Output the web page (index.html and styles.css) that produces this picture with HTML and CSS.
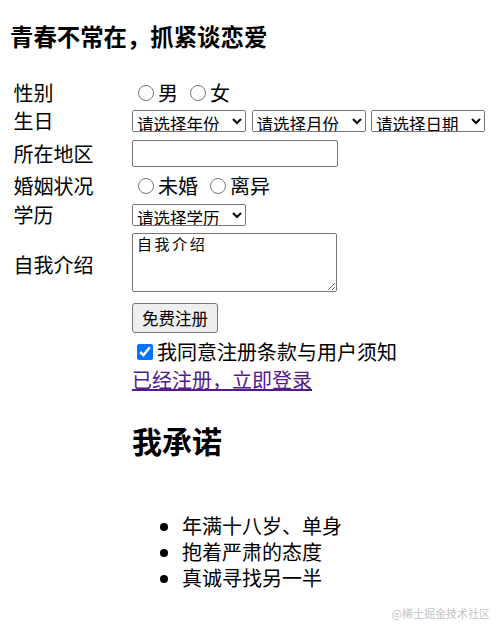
FILE: index.html
```html
<!DOCTYPE html>
<html lang="zh-CN">
<head>
<meta charset="utf-8">
<title>青春不常在，抓紧谈恋爱</title>
<link rel="stylesheet" href="styles.css">
</head>
<body>
<main class="page">
  <h3 class="title">青春不常在，抓紧谈恋爱</h3>
  <form class="form">
    <div class="label">性别</div>
    <div class="field choices">
      <label class="choice"><input type="radio" name="sex">男</label>
      <label class="choice"><input type="radio" name="sex">女</label>
    </div>

    <div class="label">生日</div>
    <div class="field selects">
      <select class="sel"><option>请选择年份</option></select>
      <select class="sel"><option>请选择月份</option></select>
      <select class="sel"><option>请选择日期</option></select>
    </div>

    <div class="label">所在地区</div>
    <div class="field"><input class="text" type="text"></div>

    <div class="label">婚姻状况</div>
    <div class="field choices">
      <label class="choice"><input type="radio" name="marry">未婚</label>
      <label class="choice"><input type="radio" name="marry">离异</label>
    </div>

    <div class="label">学历</div>
    <div class="field selects">
      <select class="sel"><option>请选择学历</option></select>
    </div>

    <div class="label">自我介绍</div>
    <div class="field field-top"><textarea class="intro">自我介绍</textarea></div>

    <div class="field"><button type="button" class="btn">免费注册</button></div>
    <div class="field"><label class="agree"><input type="checkbox" checked>我同意注册条款与用户须知</label></div>
    <div class="field"><a href="#" class="login">已经注册，立即登录</a></div>
  </form>

  <section class="promise">
    <h2 class="promise-title">我承诺</h2>
    <ul class="promise-list">
      <li>年满十八岁、单身</li>
      <li>抱着严肃的态度</li>
      <li>真诚寻找另一半</li>
    </ul>
  </section>

  <div class="watermark">@稀土掘金技术社区</div>
</main>
</body>
</html>
```

FILE: styles.css
```css
html, body {
  margin: 0;
  padding: 0;
  background: #fff;
}

body {
  font-family: "Noto Sans CJK SC", "Microsoft YaHei", sans-serif;
  font-size: 20px;
  color: #000;
}

.page {
  position: relative;
  display: flow-root;
  box-sizing: border-box;
  min-height: 636px;
  padding: 0 10px;
}

.title {
  margin: 21px 0 0;
  font-size: 23.4px;
  line-height: 30px;
  font-weight: 700;
}

.form {
  display: grid;
  grid-template-columns: 122px 1fr;
  grid-template-rows: 25px 31px 35px 29px 29px 71px 36px 32px 24px;
  align-items: center;
  margin-top: 29px;
}

.label {
  grid-column: 1;
  padding-left: 3.5px;
  line-height: 25px;
}

.field {
  grid-column: 2;
  display: flex;
  align-items: center;
}

.field-top {
  align-self: start;
  padding-top: 4px;
}

.choices {
  gap: 12px;
  padding-left: 6px;
}

.choice {
  display: flex;
  align-items: center;
  gap: 4px;
  line-height: 25px;
}

.choice input {
  margin: 0;
  width: 16px;
  height: 16px;
}

.selects {
  gap: 5.5px;
}

.sel {
  width: 114px;
  height: 22px;
  margin: 0;
  padding-top: 0;
  padding-bottom: 0;
  font-family: "Noto Sans CJK SC", sans-serif;
  font-size: 16.5px;
  color: #000;
}

.text {
  box-sizing: border-box;
  width: 206px;
  height: 27px;
  margin: 0;
  border: 1px solid #767676;
  border-radius: 2px;
  font-size: 16px;
}

.intro {
  box-sizing: border-box;
  width: 205px;
  height: 59px;
  margin: 0;
  padding: 0 4px;
  border: 1px solid #767676;
  border-radius: 2px;
  font-family: "Noto Sans CJK SC", sans-serif;
  font-size: 15px;
  letter-spacing: 2.6px;
  line-height: 20px;
  color: #000;
}

.btn {
  box-sizing: border-box;
  width: 86px;
  height: 30px;
  margin: 0;
  padding: 0;
  background: #efefef;
  border: 1px solid #767676;
  border-radius: 3px;
  font-family: "Noto Sans CJK SC", sans-serif;
  font-size: 16.5px;
  color: #000;
}

.agree {
  display: flex;
  align-items: center;
  gap: 4px;
  padding-left: 5px;
  line-height: 26px;
}

.agree input {
  margin: 0;
  width: 16px;
  height: 16px;
}

.login {
  color: #551a8b;
  text-decoration: underline;
  line-height: 24px;
}

.promise {
  margin-left: 122px;
}

.promise-title {
  margin: 28px 0 0;
  font-size: 30px;
  line-height: 40px;
  font-weight: 700;
}

.promise-list {
  margin: 53px 0 0;
  padding-left: 50px;
  line-height: 26px;
}

.watermark {
  position: absolute;
  right: 14px;
  top: 603px;
  font-size: 11px;
  line-height: 20px;
  color: #c4c4c4;
}
```
